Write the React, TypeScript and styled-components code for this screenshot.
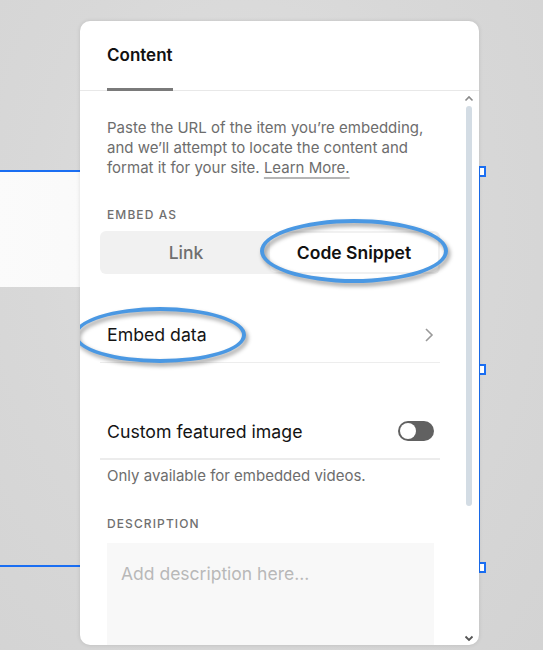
import React from "react";
import styled, { createGlobalStyle } from "styled-components";

const GlobalStyle = createGlobalStyle`
  html, body {
    margin: 0;
    padding: 0;
  }
  body {
    font-family: Inter, "Liberation Sans", sans-serif;
    background: #d6d6d6;
    overflow: hidden;
  }
  * {
    box-sizing: border-box;
  }
`;

export default function App() {
    return (
        <>
            <GlobalStyle />
            <Stage>
                <Selection>
                    <SelectedBlock />
                    <Handle $top={-6} />
                    <Handle $top={192} />
                    <Handle $top={390} />
                </Selection>

                <Panel>
                    <Header>
                        <Tab>Content</Tab>
                    </Header>
                    <Body>
                        <Content>
                            <Intro>
                                Paste the URL of the item you’re embedding, and we’ll attempt to
                                locate the content and format it for your site. <LearnMore>Learn More.</LearnMore>
                            </Intro>

                            <Label $mt={29}>Embed as</Label>
                            <Segmented>
                                <Segment>Link</Segment>
                                <Segment $active>Code Snippet</Segment>
                                <Ring style={{ left: 160, top: -12, width: 188, height: 64 }} />
                            </Segmented>

                            <Row $mt={33}>
                                <RowText>Embed data</RowText>
                                <svg width="10" height="16" viewBox="0 0 10 16">
                                    <polyline points="2,2 8,8 2,14" fill="none" stroke="#9a9a9a" strokeWidth="1.6" />
                                </svg>
                                <Ring style={{ left: -26, top: 0, width: 172, height: 56 }} />
                            </Row>

                            <Row $mt={41} $thick>
                                <RowText>Custom featured image</RowText>
                                <Toggle />
                            </Row>
                            <Note>Only available for embedded videos.</Note>

                            <Label $mt={30}>Description</Label>
                            <TextBox>Add description here...</TextBox>
                        </Content>

                        <Scroll>
                            <svg width="10" height="7" viewBox="0 0 10 7">
                                <polyline points="1.5,5.5 5,2 8.5,5.5" fill="none" stroke="#8a8a8a" strokeWidth="1.6" />
                            </svg>
                            <Thumb />
                            <Spacer />
                            <svg width="10" height="7" viewBox="0 0 10 7">
                                <polyline points="1.5,1.5 5,5 8.5,1.5" fill="none" stroke="#555" strokeWidth="1.8" />
                            </svg>
                        </Scroll>
                    </Body>
                </Panel>
            </Stage>
        </>
    );
}

const Stage = styled.div`
    position: relative;
    width: 543px;
    height: 650px;
    overflow: hidden;
    padding: 21px 0 0 80px;
    background: radial-gradient(ellipse at 45% 35%, #e0e0e0 0%, #d8d8d8 50%, #d3d3d3 100%);
`

const Selection = styled.div`
    position: absolute;
    left: -10px;
    top: 170px;
    width: 490px;
    height: 397px;
    border: 2px solid #1a6ef2;
`

const SelectedBlock = styled.div`
    height: 115px;
    background: linear-gradient(90deg, #fbfbfb 0%, #f7f7f7 60%, #ececec 100%);
`

const Handle = styled.span<{ $top: number }>`
    position: absolute;
    right: -8px;
    top: ${p => p.$top}px;
    width: 8px;
    height: 11px;
    background: #fff;
    border: 2px solid #1a6ef2;
`

const Panel = styled.div`
    position: relative;
    z-index: 2;
    width: 399px;
    height: 624px;
    background: #fff;
    border-radius: 10px;
    box-shadow: 0 0 4px rgba(0, 0, 0, 0.12);
    overflow: hidden;
    display: flex;
    flex-direction: column;
`

const Header = styled.div`
    height: 70px;
    padding: 0 27px;
    display: flex;
    align-items: flex-end;
    border-bottom: 1px solid #e8e8e8;
`

const Tab = styled.div`
    font-size: 17px;
    font-weight: 600;
    line-height: 20px;
    color: #111;
    padding-bottom: 23px;
    border-bottom: 3px solid #7a7a7a;
    margin-bottom: -1px;
`

const Body = styled.div`
    flex: 1;
    display: flex;
    min-height: 0;
`

const Content = styled.div`
    flex: 1;
    padding: 27px 19px 0 20px;
`

const Intro = styled.p`
    margin: 0;
    padding: 0 7px;
    font-size: 15px;
    line-height: 20px;
    color: #6d6d6d;
`

const LearnMore = styled.span`
    text-decoration: underline;
    text-decoration-color: #b5b5b5;
    text-decoration-thickness: 2px;
    text-underline-offset: 4px;
`

const Label = styled.div<{ $mt: number }>`
    margin-top: ${p => p.$mt}px;
    padding: 0 7px;
    font-size: 12px;
    line-height: 16px;
    font-weight: 500;
    letter-spacing: 1.1px;
    text-transform: uppercase;
    color: #6f6f6f;
`

const Segmented = styled.div`
    position: relative;
    margin-top: 8px;
    height: 43px;
    padding: 2px;
    border-radius: 6px;
    background: #f1f1f1;
    display: grid;
    grid-template-columns: 1fr 1fr;
`

const Segment = styled.div<{ $active?: boolean }>`
    display: flex;
    align-items: center;
    justify-content: center;
    border-radius: 5px;
    font-size: 17.5px;
    font-weight: ${p => (p.$active ? 600 : 500)};
    color: ${p => (p.$active ? "#111" : "#6f6f6f")};
    background: ${p => (p.$active ? "#fff" : "transparent")};
`

const Ring = styled.span`
    position: absolute;
    border: 4px solid #4a98e3;
    border-radius: 50%;
    filter: drop-shadow(2px 3px 2px rgba(0, 0, 0, 0.4));
    pointer-events: none;
`

const Row = styled.div<{ $mt: number; $thick?: boolean }>`
    position: relative;
    margin-top: ${p => p.$mt}px;
    height: 56px;
    padding: 0 6px 0 7px;
    display: flex;
    align-items: center;
    justify-content: space-between;
    border-bottom: ${p => (p.$thick ? "2px solid #ececec" : "1px solid #ededed")};
`

const RowText = styled.span`
    font-size: 17.7px;
    color: #141414;
`

const Toggle = styled.span`
    position: relative;
    width: 36px;
    height: 20px;
    border-radius: 10px;
    background: #616161;

    &::after {
        content: "";
        position: absolute;
        left: 2px;
        top: 2px;
        width: 16px;
        height: 16px;
        border-radius: 50%;
        background: #fff;
    }
`

const Note = styled.div`
    margin-top: 6px;
    padding: 0 7px;
    font-size: 15px;
    line-height: 20px;
    color: #6d6d6d;
`

const TextBox = styled.div`
    margin: 11px 6px 0 7px;
    height: 110px;
    padding: 20px 14px;
    background: #f8f8f8;
    font-size: 17.5px;
    line-height: 22px;
    color: #b8b8b8;
`

const Scroll = styled.div`
    width: 19px;
    padding: 4px 0 3px 0;
    display: flex;
    flex-direction: column;
    align-items: center;
    margin-right: 1px;
`

const Thumb = styled.div`
    margin-top: 4px;
    width: 6px;
    height: 400px;
    border-radius: 3px;
    background: #d3dce4;
`

const Spacer = styled.div`
    flex: 1;
`
